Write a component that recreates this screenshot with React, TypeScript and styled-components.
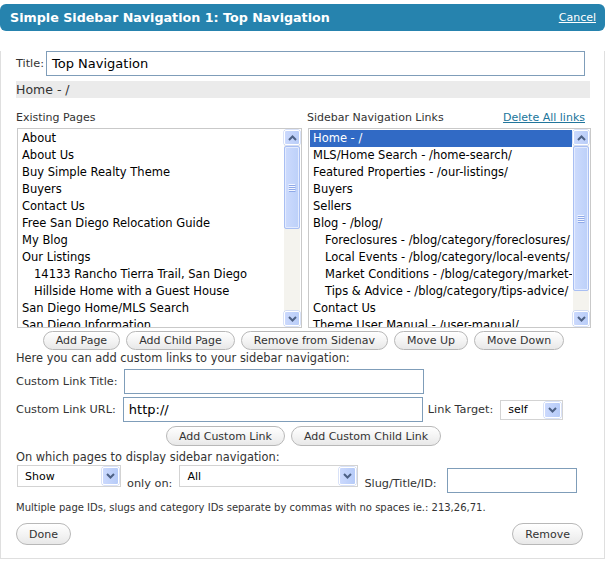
import React from "react";
import styled, { createGlobalStyle } from "styled-components";

const Global = createGlobalStyle`
  html, body { margin: 0; padding: 0; background: #fff; }
  body { font-family: "DejaVu Sans", Verdana, sans-serif; font-size: 11px; color: #333; }
  * { box-sizing: border-box; }
`;

const Panel = styled.div`
  width: 605px;
  margin-top: 4px;
`;

const Header = styled.div`
  height: 27px;
  background: #2683ae;
  border-radius: 6px;
  display: flex;
  align-items: center;
  justify-content: space-between;
  padding: 0 9px 0 10px;
`;

const HeaderTitle = styled.h3`
  margin: 0;
  font-size: 12.7px;
  font-weight: bold;
  color: #fff;
`;

const CancelLink = styled.a`
  color: #fff;
  font-size: 11px;
  text-decoration: underline;
  cursor: pointer;
`;

const Body = styled.div`
  border: 1px solid #dfdfdf;
  border-top: none;
  padding: 0 13px 13px 15px;
`;

const TitleRow = styled.div`
  display: flex;
  align-items: center;
  gap: 2px;
  margin-top: 20px;
`;

const Label = styled.span<{ $ml?: number; $mt?: number }>`
  font-size: 11.3px;
  color: #333;
  white-space: nowrap;
  margin-left: ${(p) => p.$ml ?? 0}px;
  margin-top: ${(p) => p.$mt ?? 0}px;
`;

const TextInput = styled.div<{ $w: number; $h?: number; $ml?: number; $mt?: number }>`
  width: ${(p) => p.$w}px;
  height: ${(p) => p.$h ?? 25}px;
  margin-left: ${(p) => p.$ml ?? 0}px;
  margin-top: ${(p) => p.$mt ?? 0}px;
  border: 1px solid #7f9db9;
  background: #fff;
  padding: 0 5px;
  display: flex;
  align-items: center;
  font-size: 13px;
  color: #000;
  flex: none;
`;

const HomeBar = styled.div`
  margin-top: 5px;
  width: 574px;
  height: 17px;
  line-height: 17px;
  background: #ebebeb;
  font-size: 12.5px;
  color: #333;
`;

const Columns = styled.div`
  display: grid;
  grid-template-columns: 286px 284px;
  column-gap: 5px;
  margin-top: 12px;
`;

const Column = styled.div`
  display: flex;
  flex-direction: column;
`;

const ColLabelRow = styled.div`
  display: flex;
  justify-content: space-between;
  height: 16px;
  line-height: 16px;
  margin-bottom: 2px;
`;

const ColLabel = styled.span`
  font-size: 11px;
  color: #333;
`;

const DeleteLink = styled.a`
  color: #21759b;
  text-decoration: underline;
  font-size: 11px;
  margin-right: 6px;
  cursor: pointer;
`;

const ListBox = styled.div`
  margin-left: 1px;
  height: 200px;
  border: 1px solid #c9c9c9;
  background: #fff;
  display: flex;
`;

const Items = styled.div`
  flex: 1;
  min-width: 0;
  padding: 1px;
  overflow: hidden;
`;

const Item = styled.div<{ $child?: boolean; $selected?: boolean }>`
  height: 17px;
  line-height: 17px;
  padding-left: ${(p) => (p.$child ? 15 : 3)}px;
  white-space: nowrap;
  overflow: hidden;
  font-size: 11.5px;
  color: ${(p) => (p.$selected ? "#fff" : "#000")};
  background: ${(p) => (p.$selected ? "#316ac5" : "transparent")};
`;

const ScrollBar = styled.div`
  width: 16px;
  margin: 1px 1px 1px 0;
  background: #f4f3ee;
  display: flex;
  flex-direction: column;
`;

const ScrollButton = styled.div`
  height: 15px;
  flex: none;
  border: 1px solid #fff;
  border-radius: 2px;
  box-shadow: 0 0 0 0.5px #b4c6f2;
  background: linear-gradient(to right, #cbd9fd, #b9cdf8);
  display: flex;
  align-items: center;
  justify-content: center;
`;

const ScrollThumb = styled.div`
  margin-top: 1px;
  flex: none;
  border: 1px solid #a9bff3;
  border-radius: 2px;
  background: linear-gradient(to right, #cddbfd, #bcd0f9);
  box-shadow: inset 0 0 0 1px #e3ebfe;
  display: flex;
  align-items: center;
  justify-content: center;
`;

const Track = styled.div`
  flex: 1;
`;

const ButtonRow = styled.div<{ $mt: number }>`
  display: flex;
  justify-content: center;
  gap: 6px;
  margin-top: ${(p) => p.$mt}px;
`;

const Button = styled.button<{ $h: number }>`
  height: ${(p) => p.$h}px;
  padding: 0 12px;
  border: 1px solid #b8b8b8;
  border-radius: 11px;
  background: linear-gradient(#ffffff, #f2f2f2 60%, #e8e8e8);
  font-family: "DejaVu Sans", Verdana, sans-serif;
  font-size: 11px;
  color: #333;
  display: inline-flex;
  align-items: center;
  white-space: nowrap;
  cursor: pointer;
`;

const Note = styled.div<{ $mt: number; $size?: number }>`
  margin-top: ${(p) => p.$mt}px;
  line-height: 13px;
  font-size: ${(p) => p.$size ?? 11.4}px;
  color: #333;
  white-space: nowrap;
`;

const FieldRow = styled.div<{ $mt: number }>`
  display: flex;
  align-items: center;
  margin-top: ${(p) => p.$mt}px;
`;

const DisplayRow = styled.div`
  display: flex;
  align-items: flex-start;
  margin-top: 1px;
  height: 28px;
`;

const SelectBox = styled.div<{ $w: number; $h: number; $ml?: number }>`
  width: ${(p) => p.$w}px;
  height: ${(p) => p.$h}px;
  margin-left: ${(p) => p.$ml ?? 0}px;
  flex: none;
  border: 1px solid #d3d3d3;
  background: #fff;
  display: flex;
  align-items: center;
  justify-content: space-between;
  padding: 1px 1px 1px 7px;
  font-size: 11px;
  color: #000;
`;

const SelectArrow = styled.div`
  width: 17px;
  height: 100%;
  border: 1px solid #fff;
  border-radius: 2px;
  box-shadow: 0 0 0 0.5px #b4c6f2;
  background: linear-gradient(to right, #cbd9fd, #b6cbf8);
  display: flex;
  align-items: center;
  justify-content: center;
`;

const BottomRow = styled.div`
  display: flex;
  justify-content: space-between;
  margin-top: 9px;
  padding-right: 8px;
`;

const Chevron = ({ dir }: { dir: "up" | "down" }) => (
  <svg width="9" height="6" viewBox="0 0 9 6">
    <polyline
      points={dir === "up" ? "1,5 4.5,1.5 8,5" : "1,1 4.5,4.5 8,1"}
      fill="none"
      stroke="#4d6185"
      strokeWidth="2"
    />
  </svg>
);

const Grip = () => (
  <svg width="8" height="8" viewBox="0 0 8 8">
    {[0, 2, 4, 6].map((y) => (
      <g key={y}>
        <line x1="0.5" y1={y + 0.5} x2="7" y2={y + 0.5} stroke="#f2f6ff" strokeWidth="1" />
        <line x1="1" y1={y + 1.5} x2="7.5" y2={y + 1.5} stroke="#8fa9e8" strokeWidth="1" />
      </g>
    ))}
  </svg>
);

type Entry = { text: string; child?: boolean; selected?: boolean };

const existingPages: Entry[] = [
  { text: "About" },
  { text: "About Us" },
  { text: "Buy Simple Realty Theme" },
  { text: "Buyers" },
  { text: "Contact Us" },
  { text: "Free San Diego Relocation Guide" },
  { text: "My Blog" },
  { text: "Our Listings" },
  { text: "14133 Rancho Tierra Trail, San Diego", child: true },
  { text: "Hillside Home with a Guest House", child: true },
  { text: "San Diego Home/MLS Search" },
  { text: "San Diego Information" },
];

const navLinks: Entry[] = [
  { text: "Home - /", selected: true },
  { text: "MLS/Home Search - /home-search/" },
  { text: "Featured Properties - /our-listings/" },
  { text: "Buyers" },
  { text: "Sellers" },
  { text: "Blog - /blog/" },
  { text: "Foreclosures - /blog/category/foreclosures/", child: true },
  { text: "Local Events - /blog/category/local-events/", child: true },
  { text: "Market Conditions - /blog/category/market-conditions/", child: true },
  { text: "Tips & Advice - /blog/category/tips-advice/", child: true },
  { text: "Contact Us" },
  { text: "Theme User Manual - /user-manual/" },
];

const List = ({ entries, thumb }: { entries: Entry[]; thumb: number }) => (
  <ListBox>
    <Items>
      {entries.map((e, i) => (
        <Item key={i} $child={e.child} $selected={e.selected}>
          {e.text}
        </Item>
      ))}
    </Items>
    <ScrollBar>
      <ScrollButton>
        <Chevron dir="up" />
      </ScrollButton>
      <ScrollThumb style={{ height: thumb }}>
        <Grip />
      </ScrollThumb>
      <Track />
      <ScrollButton>
        <Chevron dir="down" />
      </ScrollButton>
    </ScrollBar>
  </ListBox>
);

const Select = ({ value, w, h, ml }: { value: string; w: number; h: number; ml?: number }) => (
  <SelectBox $w={w} $h={h} $ml={ml}>
    <span>{value}</span>
    <SelectArrow>
      <Chevron dir="down" />
    </SelectArrow>
  </SelectBox>
);

export default function App() {
  return (
    <>
      <Global />
      <Panel>
        <Header>
          <HeaderTitle>Simple Sidebar Navigation 1: Top Navigation</HeaderTitle>
          <CancelLink>Cancel</CancelLink>
        </Header>
        <Body>
          <TitleRow>
            <Label>Title:</Label>
            <TextInput $w={539}>Top Navigation</TextInput>
          </TitleRow>
          <HomeBar>Home - /</HomeBar>
          <Columns>
            <Column>
              <ColLabelRow>
                <ColLabel>Existing Pages</ColLabel>
              </ColLabelRow>
              <List entries={existingPages} thumb={83} />
            </Column>
            <Column>
              <ColLabelRow>
                <ColLabel>Sidebar Navigation Links</ColLabel>
                <DeleteLink>Delete All links</DeleteLink>
              </ColLabelRow>
              <List entries={navLinks} thumb={145} />
            </Column>
          </Columns>
          <ButtonRow $mt={3}>
            <Button $h={19}>Add Page</Button>
            <Button $h={19}>Add Child Page</Button>
            <Button $h={19}>Remove from Sidenav</Button>
            <Button $h={19}>Move Up</Button>
            <Button $h={19}>Move Down</Button>
          </ButtonRow>
          <Note $mt={2}>Here you can add custom links to your sidebar navigation:</Note>
          <FieldRow $mt={4}>
            <Label>Custom Link Title:</Label>
            <TextInput $w={300} $ml={6} />
          </FieldRow>
          <FieldRow $mt={3}>
            <Label>Custom Link URL:</Label>
            <TextInput $w={300} $ml={7}>http://</TextInput>
            <Label $ml={5}>Link Target:</Label>
            <Select value="self" w={63} h={20} ml={7} />
          </FieldRow>
          <ButtonRow $mt={4}>
            <Button $h={20}>Add Custom Link</Button>
            <Button $h={20}>Add Custom Child Link</Button>
          </ButtonRow>
          <Note $mt={5}>On which pages to display sidebar navigation:</Note>
          <DisplayRow>
            <Select value="Show" w={104} h={22} ml={1} />
            <Label $ml={6} $mt={12}>only on:</Label>
            <Select value="All" w={179} h={22} ml={7} />
            <Label $ml={6} $mt={12}>Slug/Title/ID:</Label>
            <TextInput $w={130} $ml={10} $mt={3} />
          </DisplayRow>
          <Note $mt={8} $size={10}>
            Multiple page IDs, slugs and category IDs separate by commas with no spaces ie.: 213,26,71.
          </Note>
          <BottomRow>
            <Button $h={22}>Done</Button>
            <Button $h={22}>Remove</Button>
          </BottomRow>
        </Body>
      </Panel>
    </>
  );
}
